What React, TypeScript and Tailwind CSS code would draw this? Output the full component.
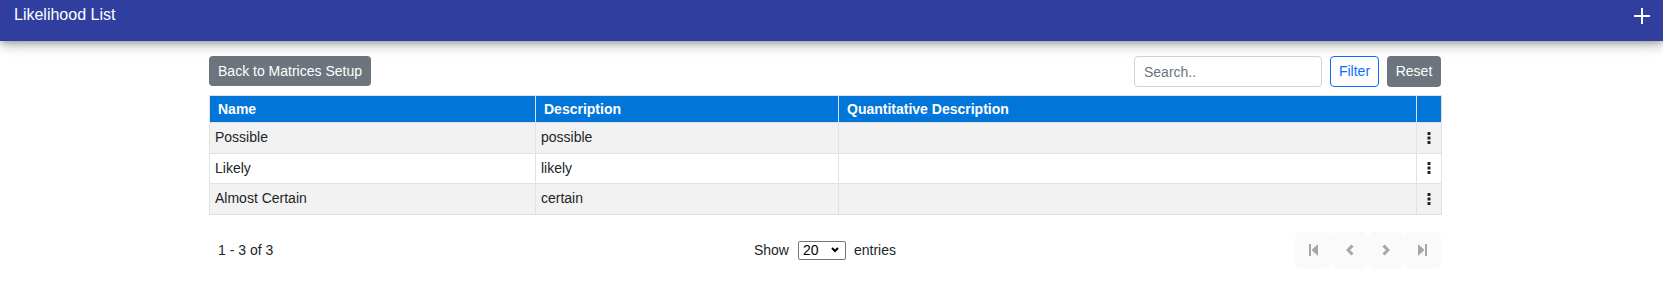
import React from "react";

const rows = [
  { name: "Possible", desc: "possible", quant: "" },
  { name: "Likely", desc: "likely", quant: "" },
  { name: "Almost Certain", desc: "certain", quant: "" },
];

function Kebab() {
  return (
    <svg width="4" height="12" viewBox="0 0 4 12" className="block mx-auto">
      <rect x="0.5" y="0" width="3" height="3" rx="0.6" fill="#212529" />
      <rect x="0.5" y="4.5" width="3" height="3" rx="0.6" fill="#212529" />
      <rect x="0.5" y="9" width="3" height="3" rx="0.6" fill="#212529" />
    </svg>
  );
}

function PageBtn({ children }: { children: React.ReactNode }) {
  return (
    <button className="w-[36.5px] h-[37px] rounded-[6px] bg-[#fafafa] flex items-center justify-center">
      {children}
    </button>
  );
}

export default function App() {
  return (
    <div className="min-h-[283px] bg-white font-['Liberation_Sans',Arial,sans-serif] text-[#212529]">
      <div className="relative z-10 h-[41px] bg-[#303f9f] flex justify-between items-start pl-[14px] pr-[13px] shadow-[0_3px_5px_-1px_rgba(0,0,0,0.2),0_6px_10px_0_rgba(0,0,0,0.14),0_1px_18px_0_rgba(0,0,0,0.12)]">
        <div className="text-white text-[16px] leading-6 pt-[3px]">Likelihood List</div>
        <svg width="16" height="16" viewBox="0 0 16 16" className="mt-[8px]">
          <path d="M8 0v16M0 8h16" stroke="white" strokeWidth="2" />
        </svg>
      </div>

      <div className="w-[1232px] ml-[209px] pt-[15px]">
        <div className="flex justify-between items-start">
          <button className="w-[162px] h-[30px] rounded-[4px] bg-[#6c757d] text-white text-[14px] leading-[30px] text-center">
            Back to Matrices Setup
          </button>
          <div className="flex items-start gap-[8px]">
            <input
              placeholder="Search.."
              className="w-[188px] h-[31px] border border-[#ced4da] rounded-[4px] px-[9px] text-[14px] placeholder:text-[#6c757d] outline-none"
            />
            <button className="w-[49px] h-[31px] border border-[#0d6efd] text-[#0d6efd] rounded-[4px] text-[14px] bg-white">
              Filter
            </button>
            <button className="w-[54px] h-[31px] bg-[#6c757d] text-white rounded-[4px] text-[14px]">
              Reset
            </button>
          </div>
        </div>

        <table className="mt-[8px] w-full table-fixed border-collapse text-[14px]">
          <colgroup>
            <col className="w-[326px]" />
            <col className="w-[303px]" />
            <col className="w-[578px]" />
            <col className="w-[25px]" />
          </colgroup>
          <thead>
            <tr>
              <th className="bg-[#0275d8] text-white font-bold text-left pl-[8px] border border-[#dee2e6] h-[27px] p-0">Name</th>
              <th className="bg-[#0275d8] text-white font-bold text-left pl-[8px] border border-[#dee2e6] h-[27px] p-0">Description</th>
              <th className="bg-[#0275d8] text-white font-bold text-left pl-[8px] border border-[#dee2e6] h-[27px] p-0">Quantitative Description</th>
              <th className="bg-[#0275d8] border border-[#dee2e6] h-[27px] p-0"></th>
            </tr>
          </thead>
          <tbody>
            {rows.map((r, i) => (
              <tr key={r.name} className={i % 2 === 0 ? "bg-[#f2f2f2]" : "bg-white"}>
                <td className="border border-[#dee2e6] h-[30.6px] pl-[5px] p-0">{r.name}</td>
                <td className="border border-[#dee2e6] h-[30.6px] pl-[5px] p-0">{r.desc}</td>
                <td className="border border-[#dee2e6] h-[30.6px] pl-[5px] p-0">{r.quant}</td>
                <td className="border border-[#dee2e6] h-[30.6px] p-0">
                  <Kebab />
                </td>
              </tr>
            ))}
          </tbody>
        </table>

        <div className="grid grid-cols-3 items-center mt-[17px] h-[37px] text-[14px]">
          <div className="pl-[9px]">1 - 3 of 3</div>
          <div className="flex justify-center items-center">
            <span>Show</span>
            <div className="relative ml-[9px] mr-[8px]">
              <select
                defaultValue="20"
                className="appearance-none w-[48px] h-[19px] border border-[#767676] rounded-[2px] pl-[4px] text-[14px] leading-[17px] bg-white text-black"
              >
                <option value="10">10</option>
                <option value="20">20</option>
                <option value="50">50</option>
              </select>
              <svg width="8" height="6" viewBox="0 0 8 6" className="absolute right-[7px] top-[7px] pointer-events-none">
                <path d="M1 1l3 3 3-3" stroke="black" strokeWidth="2" fill="none" />
              </svg>
            </div>
            <span>entries</span>
          </div>
          <div className="flex justify-end">
            <PageBtn>
              <svg width="9" height="12" viewBox="0 0 9 12">
                <rect x="0" y="0" width="2" height="12" fill="#a6a6a6" />
                <path d="M9 0L2.5 6L9 12z" fill="#a6a6a6" />
              </svg>
            </PageBtn>
            <PageBtn>
              <svg width="8" height="12" viewBox="0 0 8 12">
                <path d="M6.5 1.5L2 6l4.5 4.5" stroke="#a6a6a6" strokeWidth="3" fill="none" />
              </svg>
            </PageBtn>
            <PageBtn>
              <svg width="8" height="12" viewBox="0 0 8 12">
                <path d="M1.5 1.5L6 6l-4.5 4.5" stroke="#a6a6a6" strokeWidth="3" fill="none" />
              </svg>
            </PageBtn>
            <PageBtn>
              <svg width="9" height="12" viewBox="0 0 9 12">
                <path d="M0 0L6.5 6L0 12z" fill="#a6a6a6" />
                <rect x="7" y="0" width="2" height="12" fill="#a6a6a6" />
              </svg>
            </PageBtn>
          </div>
        </div>
      </div>
    </div>
  );
}
